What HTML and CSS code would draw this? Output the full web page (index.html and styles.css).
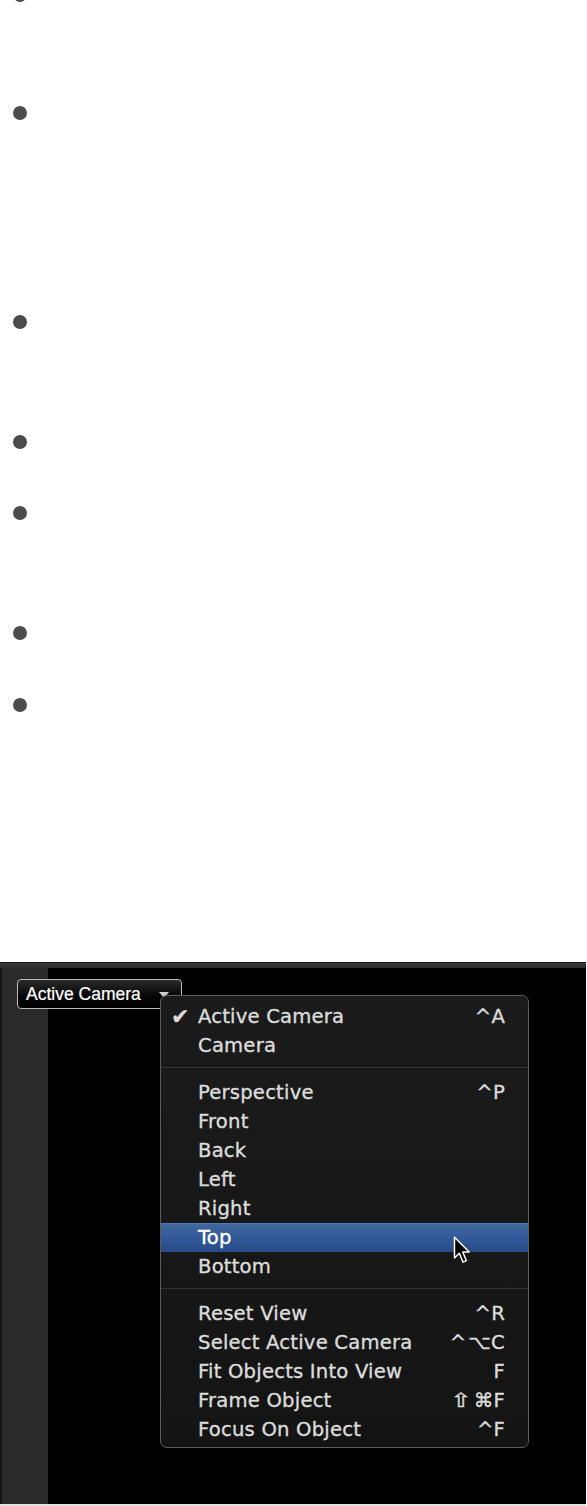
FILE: index.html
```html
<!DOCTYPE html>
<html lang="en">
<head>
<meta charset="utf-8">
<title>Camera menu</title>
<link rel="stylesheet" href="styles.css">
</head>
<body>
<section class="notes">
  <ul class="bullets">
    <li class="item h118"></li>
    <li class="item h209"></li>
    <li class="item h120"></li>
    <li class="item h71"></li>
    <li class="item h120"></li>
    <li class="item h72"></li>
    <li class="item last"></li>
  </ul>
</section>

<figure class="shot">
  <div class="topstrip"></div>
  <div class="workspace">
    <div class="sidebar"></div>
    <div class="viewport"></div>
  </div>

  <div class="popup-btn">
    <span class="popup-label">Active Camera</span>
    <span class="popup-arrow"></span>
  </div>

  <div class="menu">
    <div class="row"><span class="check">✔</span><span class="label">Active Camera</span><span class="key">^A</span></div>
    <div class="row"><span class="check"></span><span class="label">Camera</span><span class="key"></span></div>
    <div class="sep"></div>
    <div class="row"><span class="check"></span><span class="label">Perspective</span><span class="key">^P</span></div>
    <div class="row"><span class="check"></span><span class="label">Front</span><span class="key"></span></div>
    <div class="row"><span class="check"></span><span class="label">Back</span><span class="key"></span></div>
    <div class="row"><span class="check"></span><span class="label">Left</span><span class="key"></span></div>
    <div class="row"><span class="check"></span><span class="label">Right</span><span class="key"></span></div>
    <div class="row selected"><span class="check"></span><span class="label">Top</span><span class="key"></span>
      <svg class="cursor" viewBox="0 0 14 21" width="19" height="28" aria-hidden="true">
        <path d="M1 1 L1 16.5 L4.6 13 L7.4 19.6 L9.9 18.5 L7.2 12 L12 12 Z" fill="#000" stroke="#fff" stroke-width="1.1" stroke-linejoin="round"/>
      </svg>
    </div>
    <div class="row"><span class="check"></span><span class="label">Bottom</span><span class="key"></span></div>
    <div class="sep"></div>
    <div class="row"><span class="check"></span><span class="label">Reset View</span><span class="key">^R</span></div>
    <div class="row"><span class="check"></span><span class="label">Select Active Camera</span><span class="key">^<span class="gap"></span>⌥C</span></div>
    <div class="row"><span class="check"></span><span class="label">Fit Objects Into View</span><span class="key">F</span></div>
    <div class="row"><span class="check"></span><span class="label">Frame Object</span><span class="key"><span class="shift">⇧</span>⌘F</span></div>
    <div class="row"><span class="check"></span><span class="label">Focus On Object</span><span class="key">^F</span></div>
  </div>
</figure>
</body>
</html>
```

FILE: styles.css
```css
html, body {
  margin: 0;
  padding: 0;
  background: #ffffff;
  font-family: "Liberation Sans", Arial, sans-serif;
}

.notes {
  height: 962px;
  overflow: hidden;
}

.bullets {
  list-style: none;
  margin: -12px 0 0 0;
  padding: 0 0 0 13px;
  display: flex;
  flex-direction: column;
}

.item::before {
  content: "";
  display: block;
  width: 14px;
  height: 14px;
  border-radius: 50%;
  background: #4b4b4b;
}

.h118 { height: 118px; }
.h209 { height: 209px; }
.h120 { height: 120px; }
.h71 { height: 71px; }
.h72 { height: 72px; }
.last { height: 264px; }

.shot {
  position: relative;
  margin: 0;
  width: 586px;
  height: 542px;
  background: #000;
  display: flex;
  flex-direction: column;
  border-bottom: 2px solid #e2e2e2;
}

.topstrip {
  height: 5px;
  border-top: 1px solid #161616;
  background: linear-gradient(#3a3a3a, #2e2e2e);
}

.workspace {
  flex: 1;
  display: flex;
}

.sidebar {
  width: 46px;
  border-left: 2px solid #151515;
  background: #2a2a2a;
}

.viewport {
  flex: 1;
  background: #000;
}

.popup-btn {
  position: absolute;
  left: 17px;
  top: 17px;
  width: 155px;
  height: 28px;
  border: 1px solid #b9b9b9;
  border-radius: 4px;
  background: linear-gradient(#2a2a2a, #050505 60%, #000);
  display: flex;
  align-items: center;
  padding: 0 0 0 8px;
  box-sizing: content-box;
}

.popup-label {
  color: #ffffff;
  font-size: 17.5px;
  flex: 1;
  -webkit-text-stroke: 0.2px #fff;
}

.popup-arrow {
  width: 0;
  height: 0;
  margin-right: 12px;
  margin-top: 2px;
  border-left: 5px solid transparent;
  border-right: 5px solid transparent;
  border-top: 6px solid #cfcfcf;
}

.menu {
  position: absolute;
  left: 160px;
  top: 33px;
  width: 367px;
  border: 1px solid #5c5c5c;
  border-radius: 7px;
  background: linear-gradient(#1b1b1b, #141414);
  padding: 6px 0 3px 0;
  font-family: "DejaVu Sans", "Liberation Sans", sans-serif;
  font-size: 19.6px;
  color: #dcdcdc;
  -webkit-text-stroke: 0.35px currentColor;
}

.row {
  position: relative;
  height: 29px;
  line-height: 29px;
  display: grid;
  grid-template-columns: 37px 1fr auto;
  padding-right: 23px;
  letter-spacing: 0.2px;
}

.check {
  padding-left: 10px;
  font-size: 22px;
  line-height: 29px;
}

.key {
  text-align: right;
  white-space: pre;
}

.gap {
  display: inline-block;
  width: 2px;
}

.shift {
  display: inline-block;
  transform: scaleX(1.35);
  margin: 0 4px 0 3px;
}

.selected {
  background: linear-gradient(#43699f, #33589a 50%, #284b86);
  box-shadow: inset 0 1px 0 #5377b0;
  color: #ffffff;
}

.cursor {
  position: absolute;
  left: 292px;
  top: 13px;
}

.sep {
  height: 1px;
  margin: 7px 0 10px 0;
  background: #353535;
}
```
